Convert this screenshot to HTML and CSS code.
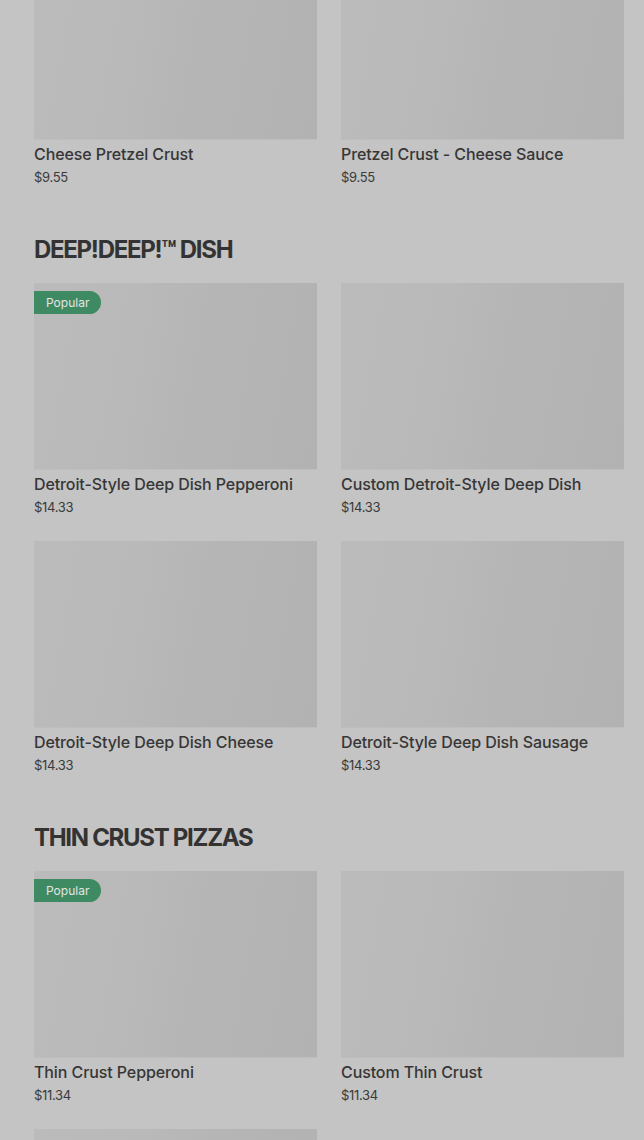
FILE: index.html
```html
<!DOCTYPE html>
<html lang="en">
<head>
    <meta charset="UTF-8">
    <meta name="viewport" content="width=device-width, initial-scale=1.0">
    <title>Menu</title>
    <link rel="stylesheet" href="styles.css">
</head>
<body>

<main class="menu">
    <!-- Pretzel crust (scrolled, heading above the fold) -->
    <section class="menu-section first">
        <div class="item-grid">
            <div class="item">
                <div class="item-photo"></div>
                <h3 class="item-name">Cheese Pretzel Crust</h3>
                <p class="item-price">$9.55</p>
            </div>
            <div class="item">
                <div class="item-photo"></div>
                <h3 class="item-name">Pretzel Crust - Cheese Sauce</h3>
                <p class="item-price">$9.55</p>
            </div>
        </div>
    </section>

    <section class="menu-section">
        <h2 class="section-title">DEEP!DEEP!&trade; DISH</h2>
        <div class="item-grid">
            <div class="item">
                <div class="item-photo">
                    <span class="badge">Popular</span>
                </div>
                <h3 class="item-name">Detroit-Style Deep Dish Pepperoni</h3>
                <p class="item-price">$14.33</p>
            </div>
            <div class="item">
                <div class="item-photo"></div>
                <h3 class="item-name">Custom Detroit-Style Deep Dish</h3>
                <p class="item-price">$14.33</p>
            </div>
            <div class="item">
                <div class="item-photo"></div>
                <h3 class="item-name">Detroit-Style Deep Dish Cheese</h3>
                <p class="item-price">$14.33</p>
            </div>
            <div class="item">
                <div class="item-photo"></div>
                <h3 class="item-name">Detroit-Style Deep Dish Sausage</h3>
                <p class="item-price">$14.33</p>
            </div>
        </div>
    </section>

    <section class="menu-section">
        <h2 class="section-title">THIN CRUST PIZZAS</h2>
        <div class="item-grid">
            <div class="item">
                <div class="item-photo">
                    <span class="badge">Popular</span>
                </div>
                <h3 class="item-name">Thin Crust Pepperoni</h3>
                <p class="item-price">$11.34</p>
            </div>
            <div class="item">
                <div class="item-photo"></div>
                <h3 class="item-name">Custom Thin Crust</h3>
                <p class="item-price">$11.34</p>
            </div>
            <!-- next row, only the photo is on screen -->
            <div class="item">
                <div class="item-photo"></div>
            </div>
        </div>
    </section>
</main>

</body>
</html>
```

FILE: styles.css
```css
body {
    margin: 0;
    padding: 0;
    background-color: #c4c4c4;
    color: #363636;
    font-family: Inter, "Noto Sans", sans-serif;
    overflow: hidden;
}
.menu {
    padding: 0 20px 0 34px;
}
/* page is scrolled, first row is cut at the top */
.menu-section.first {
    margin-top: -47px;
}
.menu-section + .menu-section {
    margin-top: 48px;
}
.section-title {
    margin: 0 0 17px;
    font-size: 24px;
    line-height: 32px;
    font-weight: 700;
    letter-spacing: -1.3px;
    color: #333;
}
.item-grid {
    display: grid;
    grid-template-columns: 1fr 1fr;
    column-gap: 24px;
    row-gap: 25px;
}
.item-photo {
    position: relative;
    height: 187px;
    background: linear-gradient(100deg, #bbbbbb 0%, #b9b9b9 35%, #b5b5b5 60%, #b2b2b2 100%);
    border-bottom: 1px solid #bebebe;
    box-sizing: border-box;
}
.badge {
    position: absolute;
    top: 8px;
    left: 0;
    height: 23px;
    line-height: 23px;
    padding: 0 12px;
    border-radius: 0 12px 12px 0;
    background-color: #3e8b63;
    color: #e4e4e4;
    font-size: 12px;
}
.item-name {
    margin: 4px 0 0;
    font-size: 16px;
    line-height: 20px;
    font-weight: 500;
    letter-spacing: -0.1px;
    color: #363636;
}
.item-price {
    margin: 4px 0 0;
    font-size: 13px;
    line-height: 18px;
    letter-spacing: -0.3px;
    color: #3a3a3a;
}
```
